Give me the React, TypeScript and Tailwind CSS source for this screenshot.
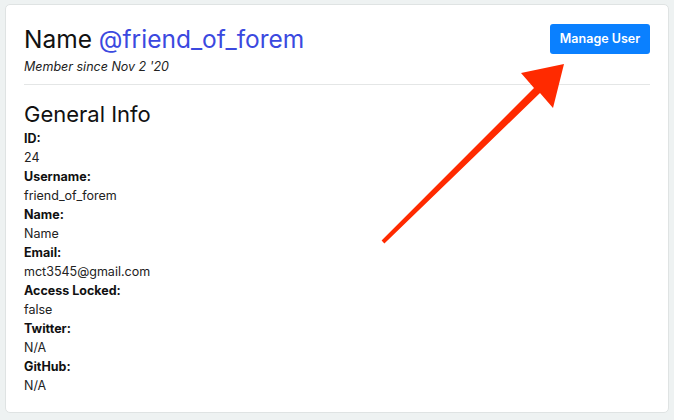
export default function App() {
  const rows = [
    { label: 'ID:', value: '24' },
    { label: 'Username:', value: 'friend_of_forem' },
    { label: 'Name:', value: 'Name' },
    { label: 'Email:', value: 'mct3545@gmail.com' },
    { label: 'Access Locked:', value: 'false' },
    { label: 'Twitter:', value: 'N/A' },
    { label: 'GitHub:', value: 'N/A' },
  ]

  return (
    <div className="relative h-[420px] w-[674px] overflow-hidden bg-[#eef2f2] px-[5px] pt-[4px] font-[Inter,_sans-serif]">
      <div className="h-[409px] w-[664px] rounded-[5px] border border-[#dfe3e3] bg-white px-[18px] pt-[18px]">
        <div className="flex items-start justify-between">
          <div>
            <h1 className="text-[24.5px] leading-[32px] text-[#111]">
              Name <span className="text-[#3b49df]">@friend_of_forem</span>
            </h1>
            <p className="mt-[3px] text-[12.5px] italic leading-[18px] text-[#222]">Member since Nov 2 '20</p>
          </div>
          <button className="mt-[1px] h-[30px] w-[100px] rounded-[3px] bg-[#0a80ff] text-[12.5px] font-semibold text-white">
            Manage User
          </button>
        </div>

        <hr className="mt-[8px] border-[#e4e6e6]" />

        <h2 className="mt-[15px] text-[22px] leading-[28px] text-[#111]">General Info</h2>
        <dl className="mt-[1px] text-[12.5px] leading-[19px] text-[#222]">
          {rows.map((row) => (
            <div key={row.label}>
              <dt className="font-bold text-[#111]">{row.label}</dt>
              <dd>{row.value}</dd>
            </div>
          ))}
        </dl>
      </div>

      {/* annotation arrow */}
      <svg className="pointer-events-none absolute left-0 top-0" width="674" height="420">
        <polygon
          points="381.6,240.6 534,88 521,73 564,64 553,108 540,93 384.4,243.4"
          fill="#ff2a00"
        />
      </svg>
    </div>
  )
}
